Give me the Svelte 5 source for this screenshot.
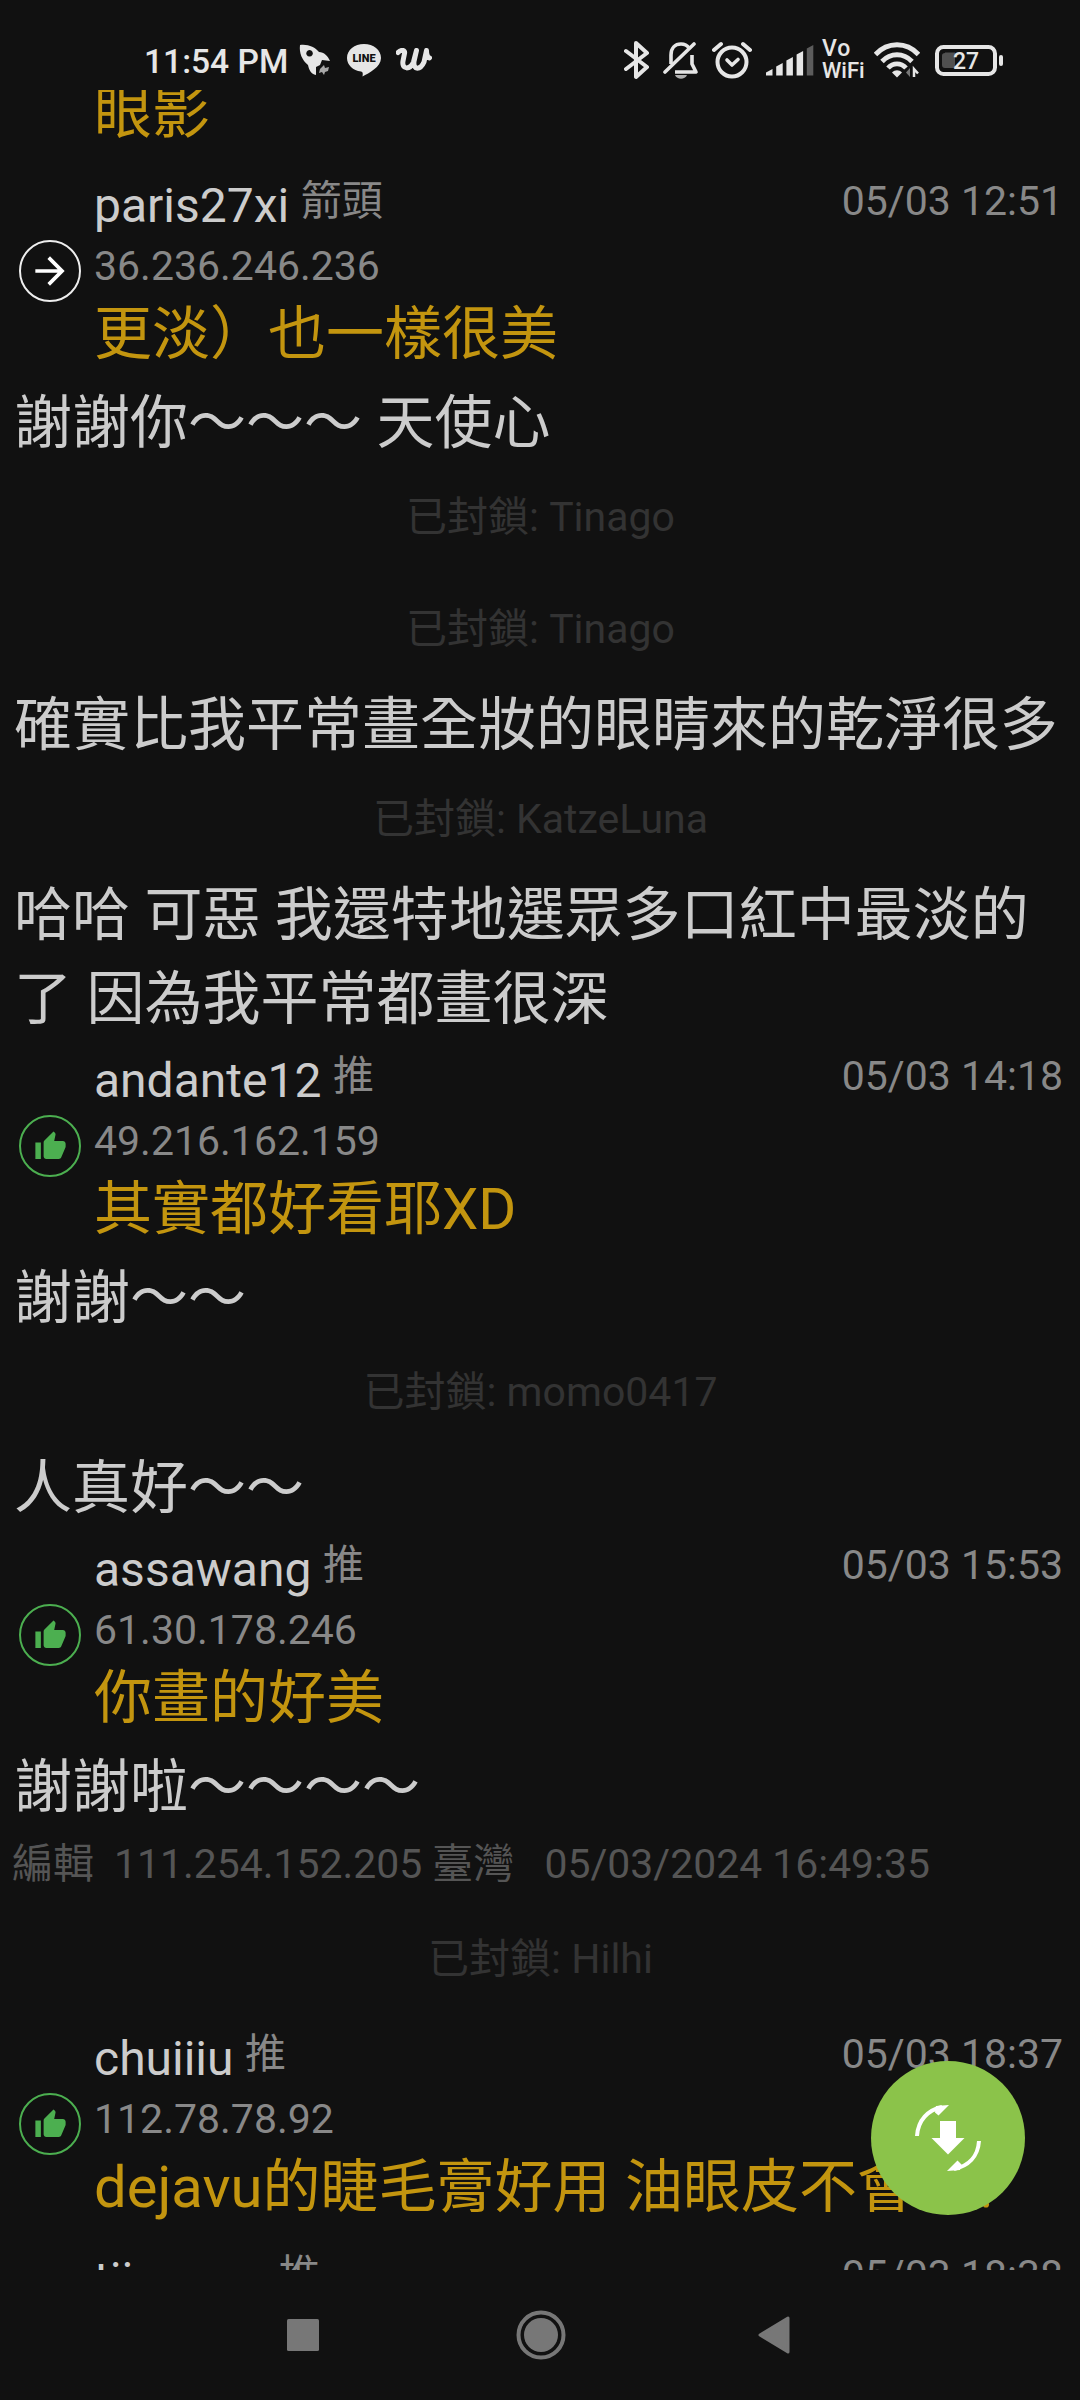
<script lang="ts">
    type Item =
        | { kind: 'comment'; tag: string; user: string; ip: string; time: string; text: string }
        | { kind: 'text'; lines: string[] }
        | { kind: 'blocked'; user: string }
        | { kind: 'edit'; ip: string; time: string };

    const items: Item[] = [
        { kind: 'comment', tag: '箭頭', user: 'paris27xi', ip: '36.236.246.236', time: '05/03 12:51', text: '更淡）也一樣很美' },
        { kind: 'text', lines: ['謝謝你～～～ 天使心'] },
        { kind: 'blocked', user: 'Tinago' },
        { kind: 'blocked', user: 'Tinago' },
        { kind: 'text', lines: ['確實比我平常畫全妝的眼睛來的乾淨很多'] },
        { kind: 'blocked', user: 'KatzeLuna' },
        { kind: 'text', lines: ['哈哈 可惡 我還特地選眾多口紅中最淡的', '了 因為我平常都畫很深'] },
        { kind: 'comment', tag: '推', user: 'andante12', ip: '49.216.162.159', time: '05/03 14:18', text: '其實都好看耶XD' },
        { kind: 'text', lines: ['謝謝～～'] },
        { kind: 'blocked', user: 'momo0417' },
        { kind: 'text', lines: ['人真好～～'] },
        { kind: 'comment', tag: '推', user: 'assawang', ip: '61.30.178.246', time: '05/03 15:53', text: '你畫的好美' },
        { kind: 'text', lines: ['謝謝啦～～～～'] },
        { kind: 'edit', ip: '111.254.152.205', time: '05/03/2024 16:49:35' },
        { kind: 'blocked', user: 'Hilhi' },
        { kind: 'comment', tag: '推', user: 'chuiiiu', ip: '112.78.78.92', time: '05/03 18:37', text: 'dejavu的睫毛膏好用 油眼皮不會暈?' },
        { kind: 'comment', tag: '推', user: 'tiiangoo', ip: '', time: '05/03 18:38', text: '' },
    ];

    const bars = [7, 13, 19, 25, 31];
</script>

<div class="screen">
    <header class="status">
        <div class="status-left">
            <span class="clock">11:54 PM</span>
            <svg class="rocket" width="32" height="32" viewBox="0 0 32 32">
                <path fill="#e6e6e6" fill-rule="evenodd" d="M1 1C9 0 16 3 20 8c5 0 9 4 11 9l-8-1-2 5-4 2v8c-5-1-7-5-8-10C3 16 0 9 1 1zm9.500 5a3.300 3.300 0 1 0 .1 0z" />
                <path fill="#a8a8a8" d="M25 21l1 3 4-1-1 4-3 1-1 3-2-3-3 1 1-4z" />
            </svg>
            <svg class="line" width="34" height="33" viewBox="0 0 34 33">
                <path fill="#e6e6e6" d="M17 0C7.500 0 0 6 0 14c0 7 6 12.500 14 13.500 2 .5 2 2 1.500 5C22 29 34 23 34 14 34 6 26.500 0 17 0z" />
                <text x="17" y="18" text-anchor="middle">LINE</text>
            </svg>
            <svg class="w" width="36" height="24" viewBox="0 0 36 24">
                <path d="M2 4.500c3-3 7.500-3 6.500 1L7 13c-1.500 9 7 9 10.500 1l3-11.500-2.500 11c-1 9 6.500 8.500 10 .5l2.500-11.500c0 5 1 6.500 3 7.500" fill="none" stroke="#e6e6e6" stroke-width="5" stroke-linecap="round" stroke-linejoin="round" />
            </svg>
        </div>
        <div class="status-right">
            <svg width="26" height="40" viewBox="0 0 26 40">
                <path d="M2 11l21 16-11 10V3l11 10L2 29" fill="none" stroke="#e6e6e6" stroke-width="4" stroke-linejoin="round" stroke-linecap="round" />
            </svg>
            <svg class="bell" width="36" height="40" viewBox="0 0 36 40">
                <path d="M8 24V15C8 8 12 4 18 4c3 0 6 1 8 4M29 15v9l4 8H12" fill="none" stroke="#e6e6e6" stroke-width="3.600" stroke-linejoin="round" />
                <path d="M2 32L31 4" stroke="#e6e6e6" stroke-width="3.600" stroke-linecap="round" />
                <path d="M12 35h12c-2 5-10 5-12 0z" fill="#b0b0b0" />
            </svg>
            <svg class="alarm" width="40" height="38" viewBox="0 0 40 38">
                <circle cx="20" cy="21" r="14.500" fill="none" stroke="#e6e6e6" stroke-width="4" />
                <path d="M15 19l5 5 6-5.500" fill="none" stroke="#e6e6e6" stroke-width="3.600" stroke-linecap="round" stroke-linejoin="round" />
                <path d="M2 9l7-6M38 9l-7-6" stroke="#e6e6e6" stroke-width="4" stroke-linecap="round" />
            </svg>
            <svg class="signal" width="48" height="32" viewBox="0 0 48 32">
                {#each bars as h, i}
                    <path d="M{i * 10.2} 31.500v-{h - 4}l6.500-3.500v{h - 0.5}z" fill={i === 4 ? '#5c5c5c' : '#e6e6e6'} />
                {/each}
            </svg>
            <span class="vowifi"><span class="vo">Vo</span><span>WiFi</span></span>
            <svg class="wifi" width="46" height="36" viewBox="0 0 46 36">
                <g fill="none" stroke="#e6e6e6" stroke-width="4.800">
                    <path d="M1.500 12.500c12-13 31-13 43 0" />
                    <path d="M8 19.500c8.500-9 21.500-9 30 0" />
                    <path d="M14 26c5-5.500 13-5.500 18 0" />
                </g>
                <path d="M18 30.500c3-3 7-3 10 0l-5 5z" fill="#e6e6e6" />
                <path d="M36 26v9l-4-4.500" fill="#777" />
                <path d="M40 35v-8l4 4.500" fill="none" stroke="#e6e6e6" stroke-width="2.500" />
            </svg>
            <svg class="battery" width="69" height="31" viewBox="0 0 69 31">
                <rect x="2" y="2" width="58" height="27" rx="6.500" fill="none" stroke="#e6e6e6" stroke-width="4" />
                <path d="M10 7.500h10v15.500H10q-3 0-3-3V10.500q0-2.500 3-2.500z" fill="#505050" />
                <rect x="64" y="10" width="4" height="11" rx="2" fill="#e6e6e6" />
                <text x="31" y="24" text-anchor="middle">27</text>
            </svg>
        </div>
    </header>

    <main class="list">
        <div class="previous">眼影</div>
        {#each items as item}
            {#if item.kind === 'comment'}
                <article class="comment">
                    <div class="badge" class:push={item.tag === '推'}>
                        {#if item.tag === '推'}
                            <svg width="33" height="33" viewBox="0 0 24 24">
                                <path fill="#4caf50" d="M1 21h4V9H1v12zm22-11c0-1.100-.9-2-2-2h-6.310l.95-4.570.03-.32c0-.41-.17-.79-.44-1.060L14.170 1 7.590 7.590C7.220 7.950 7 8.450 7 9v10c0 1.100.9 2 2 2h9c.83 0 1.540-.5 1.840-1.220l3.020-7.050c.09-.23.14-.47.14-.73v-2z" />
                            </svg>
                        {:else}
                            <svg width="44" height="44" viewBox="0 0 24 24">
                                <path fill="#fff" d="M12 4l-1.410 1.410L16.170 11H4v2h12.170l-5.580 5.590L12 20l8-8z" />
                            </svg>
                        {/if}
                    </div>
                    <div class="body">
                        <div class="head">
                            <span class="user">{item.user}</span>
                            <span class="tag">{item.tag}</span>
                            <time>{item.time}</time>
                        </div>
                        <div class="ip">{item.ip}</div>
                        <div class="message">{item.text}</div>
                    </div>
                </article>
            {:else if item.kind === 'text'}
                <div class="text">
                    {#each item.lines as line}
                        <p>{line}</p>
                    {/each}
                </div>
            {:else if item.kind === 'blocked'}
                <div class="blocked">已封鎖: {item.user}</div>
            {:else}
                <div class="edit">{`編輯  ${item.ip} 臺灣   ${item.time}`}</div>
            {/if}
        {/each}
    </main>

    <button class="fab" aria-label="Refresh">
        <svg width="68" height="68" viewBox="0 0 68 68">
            <path d="M3 32C4 16 14 6 28 3" fill="none" stroke="#fff" stroke-width="4" />
            <path d="M22 2l13-1-10.500 10.500-3.500-3z" fill="#fff" />
            <path d="M65 37C64 53 54 62 40 65" fill="none" stroke="#fff" stroke-width="4" />
            <path d="M46 66l-13 1L43.500 56.500l4 4z" fill="#fff" />
            <path d="M26 17h16v17h8.500L34 50.500 17.500 34H26z" fill="#fff" />
        </svg>
    </button>

    <nav class="navbar">
        <svg width="32" height="32" viewBox="0 0 32 32">
            <rect width="32" height="32" rx="1.500" fill="#777" />
        </svg>
        <svg class="home" width="50" height="50" viewBox="0 0 50 50">
            <circle cx="25" cy="25" r="22.500" fill="none" stroke="#777" stroke-width="4" />
            <circle cx="25" cy="25" r="17" fill="#777" />
        </svg>
        <svg width="32" height="38" viewBox="0 0 32 38">
            <path d="M2 19L30 2v34z" fill="#777" stroke="#777" stroke-width="3" stroke-linejoin="round" />
        </svg>
    </nav>
</div>

<style>
    :global(body) {
        margin: 0;
        background: #111;
    }
    .screen {
        position: relative;
        display: flex;
        flex-direction: column;
        width: 1080px;
        height: 2400px;
        overflow: hidden;
        background: #111;
        color: #ccc;
        font-family: Roboto, "Noto Sans CJK TC", sans-serif;
    }

    .status {
        display: flex;
        flex: none;
        justify-content: space-between;
        box-sizing: border-box;
        height: 90px;
        padding: 30px 76px 0 144px;
    }
    .status-left,
    .status-right {
        display: flex;
        align-items: center;
        height: 60px;
    }
    .clock {
        padding-top: 2px;
        color: #e6e6e6;
        font-size: 33.6px;
        font-weight: 500;
        white-space: nowrap;
    }
    .rocket {
        margin-left: 11px;
    }
    .line {
        margin-left: 16px;
    }
    .line text {
        font-size: 11px;
        font-weight: 900;
        fill: #111;
    }
    .w {
        margin-left: 15px;
    }
    .bell {
        margin-left: 13px;
    }
    .alarm {
        margin-left: 13px;
    }
    .signal {
        margin-left: 14px;
    }
    .vowifi {
        display: flex;
        flex-direction: column;
        width: 42px;
        margin-left: 8px;
        color: #e6e6e6;
        font-size: 22px;
        font-weight: 500;
        line-height: 22px;
    }
    .vo {
        font-size: 23px;
        letter-spacing: 1px;
    }
    .wifi {
        margin-left: 10px;
    }
    .battery {
        margin-left: 15px;
    }
    .battery text {
        font-size: 23px;
        font-weight: 500;
        fill: #e6e6e6;
    }

    .list {
        height: 2180px;
        flex: none;
        overflow: hidden;
    }
    .previous {
        height: 83px;
        margin-top: -11px;
        padding-left: 94px;
        color: #c3950f;
        font-size: 58px;
        line-height: 68px;
    }

    .comment {
        display: flex;
        height: 221px;
    }
    .badge {
        display: flex;
        align-items: center;
        justify-content: center;
        flex: none;
        box-sizing: border-box;
        width: 62px;
        height: 62px;
        margin: 78px 13px 0 19px;
        border: 2.5px solid #eee;
        border-radius: 50%;
    }
    .badge.push {
        border-color: #4caf50;
    }
    .body {
        flex: 1;
        padding-right: 17px;
        white-space: nowrap;
    }
    .head {
        display: flex;
        height: 85px;
    }
    .user {
        font-size: 48px;
        line-height: 87px;
    }
    .tag {
        margin-left: 11.5px;
        color: #888;
        font-size: 41px;
        line-height: 78px;
    }
    time {
        margin-left: auto;
        color: #888;
        font-size: 41px;
        line-height: 78px;
    }
    .ip {
        height: 50px;
        color: #888;
        font-size: 41px;
        line-height: 38px;
    }
    .message {
        color: #c3950f;
        font-size: 58px;
        line-height: 74px;
    }

    .text {
        padding-left: 14px;
        font-size: 58px;
        white-space: nowrap;
    }
    .text p {
        margin: 0;
        height: 84px;
        line-height: 80px;
    }
    .text p:last-child {
        height: 78px;
    }
    .blocked {
        height: 112px;
        padding-left: 1px;
        color: #333;
        font-size: 41px;
        line-height: 112px;
        text-align: center;
    }
    .edit {
        height: 78px;
        padding-left: 12px;
        color: #555;
        font-size: 40.9px;
        line-height: 78px;
        white-space: pre;
    }

    .fab {
        position: absolute;
        top: 2061px;
        left: 871px;
        display: flex;
        align-items: center;
        justify-content: center;
        width: 154px;
        height: 154px;
        padding: 0;
        border: 0;
        border-radius: 50%;
        background: #8bc34a;
    }

    .navbar {
        display: flex;
        align-items: center;
        justify-content: space-between;
        box-sizing: border-box;
        flex: 1;
        padding: 0 290px 0 287px;
    }
    .home {
        margin-left: 4px;
    }
</style>
